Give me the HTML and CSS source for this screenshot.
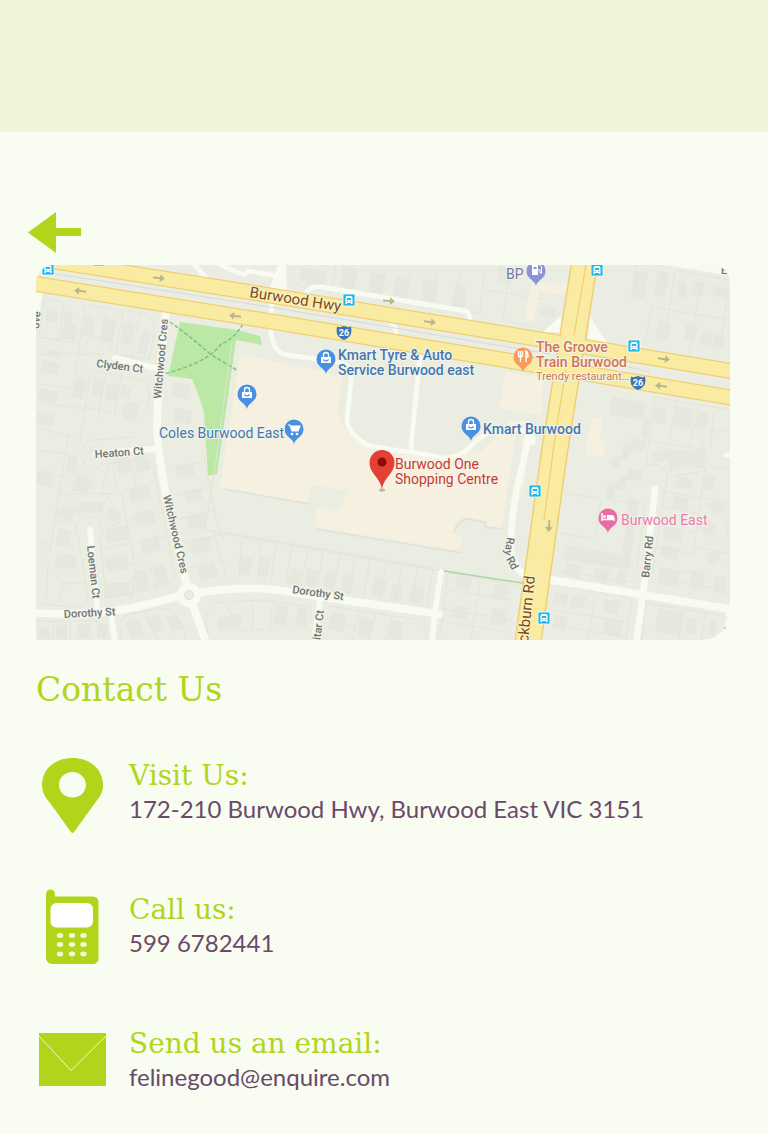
FILE: index.html
```html
<!DOCTYPE html>
<html lang="en">
<head>
<meta charset="utf-8">
<meta name="viewport" content="width=device-width, initial-scale=1">
<title>Contact Us</title>
<link rel="stylesheet" href="styles.css">
</head>
<body>
<header class="banner"></header>
<main class="page">
  <button class="back" type="button" aria-label="Back">
    <svg width="53" height="41" viewBox="0 0 53 41"><path d="M0 20.500 28 0v16h25v8H28v17z"/></svg>
  </button>

  <svg class="map" viewBox="36 265 694 375" role="img" aria-label="Map of Burwood One Shopping Centre">
    <defs>
      <path id="pin" d="M0 15C-1 9-9.500 8-9.500 0a9.500 9.500 0 0 1 19 0C9.500 8 1 9 0 15z"/>
      <g id="bag"><path d="M-5-1H5V5H-5z" fill="#fff"/><path d="M-2.500-1v-2a2.500 2.500 0 0 1 5 0v2" fill="none" stroke="#fff" stroke-width="1.300"/><path d="M-2.500 1.500q2.500 3 5 0" fill="none" stroke="#4a90e2" stroke-width="1.200"/></g>
      <g id="stop"><rect x="-6" y="-6" width="12" height="12" rx="1.500" fill="#1fb9f0" stroke="#f8fbf1" stroke-width=".8"/><path d="M-3.500 4V-2q0-2 2-2h3q2 0 2 2v6H2V3h-4v1z" fill="#fff"/><path d="M-2.200-2h4.400v2h-4.400zM-2.200 1h1v1h-1zM1.200 1h1v1h-1z" fill="#1fb9f0"/></g>
      <path id="arrow" d="M-6-1H1V-4L6 0 1 4V1H-6z" fill="#bab58a"/>
      <g id="shield"><path d="M-7-5.500 Q-4-4 0-6Q4-4 7-5.500 8-2 7 2 5 6 0 8-5 6-7 2-8-2-7-5.500z" fill="#3a76bd"/><text y="4" class="route">26</text></g>
    </defs>

    <rect x="36" y="265" width="694" height="375" fill="#ebede2"/>

    <g class="houses">
      <path d="M47 308l12 2-2 13-12-2zM64 312l9 2-1 9 6 3-1 3-13-3zM63 327l14 3-2 11-14-3zM86 315l9 4-2 18-12-3zM105 317l11 4-3 22-12-3zM124 321l11 3-3 22-12-3zM143 330l8 2-5 24-9-3zM48 349l13 3-1 6-14-3zM44 360l16 3-2 12-18-3zM40 388l18 4-3 12-17-4zM38 412l16 3-2 12-16-3zM76 377l11 3-4 20-12-3zM94 378l11 3-3 15-11-2zM108 382l12 3-4 17-12-3zM122 384l10 3-2 12-10-3zM124 402l15 1-2 18-15-2zM174 382l16 2-2 15-17-2zM174 408l18 2-1 14-18-2z"/>
      <path d="M68 455l9 1-1 17-10-2zM37 470l16 2-1 15-15-2zM78 474l16 6-7 14-17-4zM114 460l14-4 5 14-14 6zM134 457l13-3 4 15-14 4zM80 502l24 1-2 10-25-2zM110 507l12 6-7 10-11-7zM62 505l15 5-8 12-14-6zM60 527l12 4-3 16-15-2zM58 554l19 1-1 14-22-2zM129 490l19-4 2 12-20 4zM134 513l19-4 3 13-20 4zM106 529l21-4 2 14-22 4zM106 558l21-3 2 15-22 2zM106 584l24-2v14l-26 3zM140 541l18-6 3 14-19 6zM134 572l12-3 3 18-13 4zM153 568l11-4 6 18-13 5zM176 466l17-4 2 14-18 3zM184 491l17-3 2 12-17 3zM186 516l19-3 2 13-18 3zM190 540l20-4 2 14-20 4zM197 566l16-4 6 15-18 4z"/>
      <path d="M38 628h12v11H38zM56 625h11v14H56zM77 624h14v14H77zM97 624h11v14H97zM125 622l13-4 7 16-13 4zM145 619l12-5 8 14-11 7zM165 618l12-4 7 14-11 5zM218 619l22-6 2 12-24 6zM240 556l13 2-3 18-10-2zM262 556l9 2-4 19-10-2zM292 568l10 2-3 15-12-2zM307 568l12 3-4 17-11-3zM326 571l11 2-3 17-11-3zM344 574l10 3-3 17-11-3zM375 577l12 3-3 18-13-3zM393 584l10 2-3 15-11-2zM413 585l12 3-3 16-13-3zM275 604l13 2-2 20-13-2zM298 607l10 2-2 19-11-2zM331 612l15 2-2 18-16-2zM361 616l13 3-4 19-13-2zM392 620l12 3-4 17-12-2zM458 574l14 3-3 14-15-3zM496 583l14 3-4 14-14-3zM455 605l14 2-3 13-15-3zM493 608l15 2-3 16-15-2z"/>
      <path d="M300 267l27 4-3 15-24-4zM343 266l15 3-4 22-15-3zM371 272l15 3-4 22-15-3zM396 277l14 3-4 21-14-3zM424 279l15 3-3 21-16-3zM455 284l12 3-3 22-13-3zM499 266l14 1-2 17-14-2zM540 306l17 2-2 10-16-2zM635 270l13 3-4 26-12-3zM658 270l11 3-4 25-12-3zM675 281l10 1 3 18-9-2zM693 281l13 2-4 13-11-2zM714 286l13 2-2 10-13-2zM659 319l12 4-3 18-14-3zM686 323l12 4-3 14-11-3zM703 331l10 3-3 13-11-3zM715 333l11 3-3 14-11-3z"/>
      <path d="M611 396l35 7-3 17-34-5zM655 407l12 3-2 14-12-2zM676 405l18 4-3 20-17-4zM698 411l11 3-4 15-11-3zM644 417l6 1-3 20-5-1zM668 450l24 1 14-2-3 21-12-6-21 8zM651 453l17-6 4 12-18 4zM679 476l14 4-3 10-15-4zM706 473l10 2-2 16-12-3zM674 495l16 4-3 12-15-3zM706 505l12-6 8 9-9 9zM664 528l19 4-2 10-19-3zM697 526l12-7 8 9-11 9zM662 545l17 3-2 13-18-4zM706 555l12-5 4 10-12 6zM659 567l21 5-2 16-19-4zM692 570l13 4-3 16-13-3zM714 577l11-1v19l-12-3zM632 438l14 3-1 9-15 2-2 9-8-1-1 9-9-2 2-9 10-4 1-10 8 1zM630 468l12 3-2 10-12-1-4 9-9 1-2 9-8-2 2-12 12-3 2-8 7 1zM565 545l57 10 7-57 10 2-10 70-65-10zM567 562l13 3-2 13-14-3zM596 568l14 3-3 12-14-3zM620 570l7 3-3 12-9-2zM556 592l13 2-3 12-14-3zM574 594l13 2-4 13-14-3zM605 599l16 3-3 13-16-3zM556 615l12 2-3 13-13-2zM606 619l17 3-3 15-18-3zM658 608l25 4-3 24-25-4zM688 617l10 3-3 15-10-3zM710 620l8 2-4 15-6-3z"/>
    </g>
    <path class="lots" d="M45 299l19 3-5 38-20-3zM39 337l42 7M85 305l-10 70M85 305l56 8q12 2 14 13l-6 34M105 308l-4 38M123 312l-7 40M140 314l-8 42M36 354l68 0M82 356a15 15 0 0 1 30-6q4 6 12 5l26 5M36 384l56 6M36 402l54 8M84 365q4 8 14 7l30 5q20 2 22 12l-2 20M90 375l-10 67M106 372l-8 45M122 376l-8 40M72 405l38 7M36 428l36 8M68 436l-18 116M36 450l34 4M36 472l30 4M82 454a13 13 0 0 0 22 10l40-4q8 0 9 6M98 442l-38 52h52M82 450q2-10 14-10l40-3M110 462l-9 32h13M112 462l6 28M130 460l6 26M121 491l14 74M67 495l16 23M111 493l-14 22M54 520l24 6M36 540l16 6M76 533a13 13 0 1 1 25 0l26-16M101 549l30-6M103 567l33-3M78 534l9 60M36 604l44 3q8 0 8-12M100 536l6 62 60-12q10-4 8-16l-20-100M36 555l12 10-2 40M48 566l16 17-6 20M64 583h22M36 584l4 1M102 584h32l-3 15M150 566l6 26M121 491l34-8M129 520l37-8M134 544l37-8M136 567l-4 15M170 470l36-9M176 495l37-8M180 519l36-9M184 543l39-9M191 567l32-7M222 537l-6-20-14-70M214 533l13 45M242 538l-3 40M261 540l-3 38M276 544l-5 36M292 547l-6 37M308 550l-7 36M323 553l-6 36M340 556l-7 36M355 558l-7 36M370 561l-7 37M386 563l-7 37M402 566l-7 36M418 568l-7 36M222 532l211 36-6 36M36 621h60q8 2 8 19M53 621v19M70 621v19M86 621v19M121 640l-1-18q2-6 10-8l30-6q22 2 26 32M143 612l16 28M205 620q2-14 16-18l40-2 48 7q4 6 2 14M225 603l16 28 24-2M253 597v34M273 600l-3 30M205 620l4 20M328 606l92 14q8 4 5 20M360 610l-8 30M376 613l-8 27M392 616l-7 24M325 619l33 7M448 573l-8 62M480 580l-9 60M448 590l64 10M443 609l68 11M441 621l66 11M448 573l70 12"/>
    <path class="lots" d="M292 266q-8 12 10 20l180 28M312 266l-4 20M336 266l-6 26M357 270l-6 25M383 274l-6 25M410 274l-7 30M437 273l-7 35M460 273l-6 38M484 273l-4 40M484 290l60 9M508 280l-5 40 45 10M675 270l55 10M636 266l-4 32M675 272l-8 50M702 276l-14 80M652 307l78 13M652 307l-8 38M728 288l-8 62M653 397l77 13M655 398l-9 67M676 402l-7 42M697 405l-8 45M714 410l-4 40M649 441l58 9M646 465q22-2 21 16l-4 20M688 449l-28 22M666 477l40-6M661 491l70 12M730 430h-10a14 14 0 1 0 0 38h10M706 460l-13 95M663 501l-10 68q-2 8 12 10l65 12M662 507l35 6M660 526l36 6M656 548l40 6M652 567l44 6M693 546l37 8M693 514l30 30M730 538a20 20 0 0 1 0-24M563 493l82 12-8 63-79-12M601 499l-6 40-36-6M555 570l80 13M583 564l-7 24M607 568l-7 24M557 585l70 12q5 2 4 8l-5 35M595 594l-7 46M552 610l76 12M552 624l76 14M646 603l74 12M644 612l-3 28M646 603q-2 4-2 10M684 611l-5 29M706 614l-5 26"/>

    <path d="M180 322l58 8 22 6 2 9-26-5-19 134-9 2-4-63q-2-10-12-34l-14-2-10-1z" fill="#bbe8a4"/>
    <path class="trail" d="M170 322q20 14 40 32l30 18M243 324q-10 16-22 20-12 18-57 30"/>
    <path d="M232 342l-20 148-8 40 231 40" fill="none" stroke="#e0e4d9" stroke-width="1"/>
    <path d="M240 354l102 22-4 38q8 24 26 31l80 10 38-4 28-30h20l-6 70-19 37-20-3v-4l-19-4-10 4-3 12 9 4-3 14-144-24 2-20 22 3 9-19-37-6-3 18-88-15z" fill="#f5f0df"/>
    <path d="M516 432h8l-14 97-13-1z" fill="#ebede2"/>
    <path d="M516 432l-14 96-18-3z" fill="#f5f0df"/>
    <path d="M224 489l86 15M316 529l145 24M453 533q4-9 12-14l20 3v5l18 2" fill="none" stroke="#dfe2dc" stroke-width="1.500"/>
    <path d="M532 283h35v12l-28-4-5 31-10-1zM506 371l37 8-2 36-42-6zM592 417l10 2-2 22 5 1-2 16-18-3z" fill="#f5f0df"/>
    <path d="M438 570l97 15" fill="none" stroke="#aad5a5" stroke-width="1.500"/>

    <g class="road-edge"><use href="#streets"/></g>
    <g class="road"><g id="streets">
      <path d="M166 312Q158 380 157 430q2 30 10 70l22 95 18 50" stroke-width="8"/>
      <path d="M115 358l44 11M96 454q30-4 60-5M90 530l7 76M111 612l4 30" stroke-width="6"/>
      <path d="M36 613q60 3 100-6l53-13q60-10 100-2l150 22" stroke-width="8"/>
      <path d="M441 572l-6 40-3 30M320 600l-6 42" stroke-width="6"/>
      <path d="M529 432q-6 35-12 55-5 30-6 50-2 28 14 38" stroke-width="7"/>
      <path d="M540 578l190 31" stroke-width="8"/>
      <path d="M655 489l-10 90-9 65" stroke-width="7"/>
      <path d="M272 292l-1 33q-1 26 16 30l52 7q14 3 12 18l-4 40q1 14 20 25 30 6 45 7l32 6q16 0 27-12 18-18 32-17 32-1 30 14" stroke-width="5"/>
      <path d="M420 355l-9 92M307 292q4-8 20-4l139 23q5 2 3 10M385 320q12 2 11 18" stroke-width="5"/>
      <path d="M192 262l14 16M220 265l24 10 4-4 24 4" stroke-width="5"/>
      <path d="M726 455h6" stroke-width="5"/>
    </g></g>
    <path d="M543 332l18-16v16zM590 315q6 14 18 28l-20-2z" fill="#f8fbf1"/>
    <path d="M36 287v-22h8L36 278zM36 292l7 1-7 36z" fill="#f8fbf1"/>
    <path d="M665 265h65v10l-10-1zM722 607h8v33h-12q6-14 9-22z" fill="#f8fbf1"/>
    <path d="M278 265h8l1 28-18-3z" fill="#f8fbf1"/>
    <circle cx="189" cy="595" r="12" fill="#f8fbf1"/><circle cx="189" cy="595" r="4.500" fill="#ebede2" stroke="#dde1d6"/>

    <path d="M50 273l220 34 220 37 60 10M620 365l30 7" fill="none" stroke="#d7dad1" stroke-width="1"/>
    <g fill="none" stroke="#f0cf73" stroke-width="16">
      <path d="M46 260l184 29 250 40.500 260 43"/><path d="M36 284l220 35 224 37 260 43"/>
    </g>
    <path d="M572 260h26l-31 195-26 187h-26l26-187z" fill="#f9eca2" stroke="#f0cf73" stroke-width="1.500"/>
    <g fill="none" stroke="#f9eca2" stroke-width="13.500">
      <path d="M46 260l184 29 250 40.500 260 43"/><path d="M36 284l220 35 224 37 260 43"/>
    </g>
    <path d="M586 265l-12 70M566 370l-10 60-12 90" fill="none" stroke="#f0cf73" stroke-width="1.300"/>

    <use href="#arrow" transform="translate(159 278) rotate(8)"/>
    <use href="#arrow" transform="translate(80 291) rotate(188)"/>
    <use href="#arrow" transform="translate(235 316) rotate(188)"/>
    <use href="#arrow" transform="translate(389 301) rotate(5)"/>
    <use href="#arrow" transform="translate(430 322) rotate(8)"/>
    <use href="#arrow" transform="translate(664 359) rotate(8)"/>
    <use href="#arrow" transform="translate(661 386) rotate(188)"/>
    <use href="#arrow" transform="translate(549 526) rotate(95)"/>

    <use href="#stop" x="48" y="269"/><use href="#stop" x="99" y="260"/><use href="#stop" x="349" y="300"/><use href="#stop" x="597" y="270"/><use href="#stop" x="634" y="346"/><use href="#stop" x="535" y="491"/><use href="#stop" x="544" y="618"/>
    <use href="#shield" x="344" y="332"/><use href="#shield" x="638" y="382"/>

    <g class="street">
      <text transform="translate(96 367) rotate(7)">Clyden Ct</text>
      <text transform="translate(95 458) rotate(-4)">Heaton Ct</text>
      <text transform="translate(161 399) rotate(-85)">Witchwood Cres</text>
      <text transform="translate(163 496) rotate(77)">Witchwood Cres</text>
      <text transform="translate(87 546) rotate(84)">Loeman Ct</text>
      <text transform="translate(64 618) rotate(-3)">Dorothy St</text>
      <text transform="translate(292 593) rotate(8)">Dorothy St</text>
      <text transform="translate(320 643) rotate(-83)">iitar Ct</text>
      <text transform="translate(507 537) rotate(98)">Ray</text>
      <text transform="translate(506 559) rotate(62)">Rd</text>
      <text transform="translate(649 578) rotate(-84)">Barry Rd</text>
      <text transform="translate(39 329) rotate(-85)">ove</text>
      <text x="721" y="274">E</text>
      <text transform="translate(729 633) rotate(-75)">c</text>
    </g>
    <g class="highway">
      <text transform="translate(249 297) rotate(9)">Burwood Hwy</text>
      <text transform="translate(528 643) rotate(-84)">ckburn Rd</text>
    </g>

    <g fill="#4a90e2"><use href="#pin" x="326" y="359"/><use href="#pin" x="247" y="394"/><use href="#pin" x="294" y="429"/><use href="#pin" x="471" y="426"/></g>
    <use href="#bag" x="326" y="358"/><use href="#bag" x="247" y="393"/><use href="#bag" x="471" y="425"/>
    <path d="M288 425h2l2 6h6l2-5h-9" fill="#fff" stroke="#fff" stroke-width="1.200"/><circle cx="292" cy="434" r="1.300" fill="#fff"/><circle cx="297" cy="434" r="1.300" fill="#fff"/>
    <use href="#pin" x="523" y="357" fill="#f79a5e"/>
    <path d="M518.500 351v4q0 2 2 2t2-2v-4M520.500 351v11M526 362v-11q2 1 2 6h-2" fill="none" stroke="#fff" stroke-width="1.400"/>
    <use href="#pin" x="536" y="271" fill="#8c93d2"/>
    <path d="M532 265h6v10h-6z" fill="#fff"/><path d="M533.500 267h3v2h-3z" fill="#8c93d2"/><path d="M538 270h2v3h1.500v-6l-2-2" fill="none" stroke="#fff"/>
    <use href="#pin" x="608" y="518" fill="#e96ba8"/>
    <path d="M602 513v8M602 519.500h12v1.500M607 516h5q2 0 2 4" fill="none" stroke="#fff" stroke-width="1.500"/><path d="M607 515h5l2 4h-7z" fill="#fff"/><circle cx="604.500" cy="516.500" r="1.500" fill="#fff"/>
    <ellipse cx="382" cy="490" rx="3" ry="1.500" fill="#b9b8a8"/>
    <path d="M382 490C381 478 369.500 474 369.500 462.500a12.500 12.500 0 0 1 25 0C394.500 474 383 478 382 490z" fill="#e34133"/><circle cx="382" cy="462" r="4.500" fill="#8e0b0b"/>

    <g class="place">
      <g fill="#4377b3"><text x="338" y="360">Kmart Tyre &amp; Auto</text><text x="338" y="375">Service Burwood east</text><text x="159" y="438" class="regular">Coles Burwood East</text><text x="483" y="434">Kmart Burwood</text></g>
      <g fill="#c8392e" class="regular"><text x="395" y="469">Burwood One</text><text x="395" y="484">Shopping Centre</text></g>
      <g fill="#d0764f"><text x="536" y="352">The Groove</text><text x="536" y="367">Train Burwood</text><text x="536" y="380" class="note">Trendy restaurant…</text></g>
      <text x="506" y="279" class="regular" fill="#7178a8">BP</text>
      <text x="621" y="525" class="regular" fill="#eb78b0">Burwood East</text>
    </g>
  </svg>

  <h1 class="title">Contact Us</h1>

  <section class="contact">
    <svg class="icon" width="72" height="76" viewBox="0 0 72 76"><path fill-rule="evenodd" d="M36.500 0C55 0 67 12 67 27c0 8-4 13-8 18L38 74q-1.500 2-3 0L14 45C10 40 6 35 6 27 6 12 18 0 36.500 0zM36.500 14C29 14 23 19.500 23 27s6 12.500 13.500 12.500S50 34 50 27s-6-13-13.500-13z"/></svg>
    <div><h2 class="label">Visit Us:</h2><p class="detail">172-210 Burwood Hwy, Burwood East VIC 3151</p></div>
  </section>
  <section class="contact">
    <svg class="icon" width="72" height="76" viewBox="0 3 72 76"><path d="M10 5a4.500 4.500 0 0 1 9 0v2.500h38a5.500 5.500 0 0 1 5.500 5.500v56.500a5.500 5.500 0 0 1-5.500 5.500H16a6 6 0 0 1-6-6z"/><rect x="14.500" y="14" width="42.500" height="24.500" rx="6" fill="#fff"/><g fill="#f1f7db"><ellipse cx="24" cy="46.500" rx="3.200" ry="2.400"/><ellipse cx="36" cy="46.500" rx="3.200" ry="2.400"/><ellipse cx="47.500" cy="46.500" rx="3.200" ry="2.400"/><ellipse cx="24" cy="55.500" rx="3.200" ry="2.400"/><ellipse cx="36" cy="55.500" rx="3.200" ry="2.400"/><ellipse cx="47.500" cy="55.500" rx="3.200" ry="2.400"/><ellipse cx="24" cy="65" rx="3.200" ry="2.400"/><ellipse cx="36" cy="65" rx="3.200" ry="2.400"/><ellipse cx="47.500" cy="65" rx="3.200" ry="2.400"/></g></svg>
    <div><h2 class="label">Call us:</h2><p class="detail">599 6782441</p></div>
  </section>
  <section class="contact">
    <svg class="icon" width="72" height="76" viewBox="0 3 72 76"><path d="M3 10h67v53H3z"/><path d="M3 13l32 34.500L70 13" fill="none" stroke="#f1f7db"/></svg>
    <div><h2 class="label">Send us an email:</h2><p class="detail">felinegood@enquire.com</p></div>
  </section>
</main>
</body>
</html>
```
FILE: styles.css
```css
* { box-sizing: border-box; }
body { margin: 0; background: #f8fcf1; color: #6a4a6b; font-family: Lato, "Open Sans", sans-serif; }
.banner { height: 132px; background: #eff5da; }
.page { padding: 80px 38px 28px 36px; }
.back { display: block; margin: 0 0 12px -8px; padding: 0; border: 0; background: none; cursor: pointer; }
.back svg { display: block; fill: #b1d51b; }
.map { display: block; width: 100%; height: auto; border-radius: 18px 18px 28px 0; font-family: Roboto, sans-serif; }
.title, .label { margin: 0; color: #b1d51b; font-family: "DejaVu Serif", serif; font-weight: 400; }
.title { margin: 29px 0 47px; font-size: 33px; line-height: 42px; }
.contact { display: flex; gap: 21px; height: 76px; margin-bottom: 58px; }
.contact:last-child { margin-bottom: 0; }
.icon { flex: none; overflow: visible; fill: #b1d51b; }
.label { font-size: 28px; line-height: 36px; }
.detail { margin: 0; font-size: 24px; line-height: 30px; }

.houses { fill: #e6e8df; }
.lots { fill: none; stroke: #e2e5da; stroke-width: 1; }
.trail { fill: none; stroke: #7cc08c; stroke-width: 1.5; stroke-dasharray: 4 2; }
.road { fill: none; stroke: #f8fbf1; stroke-linecap: round; stroke-linejoin: round; }
.road-edge { fill: none; stroke: #dfe3d8; }
.street { fill: #6f7472; font-size: 11px; font-weight: 500; stroke: #f2f5eb; stroke-width: 2px; paint-order: stroke; }
.highway { fill: #7a4a1e; font-size: 15px; stroke: #fbf3c4; stroke-width: 2px; paint-order: stroke; }
.place { font-size: 14px; font-weight: 500; stroke: #f3f4ea; stroke-width: 2px; paint-order: stroke; }
.regular { font-weight: 400; }
.place .note { font-size: 11px; font-weight: 400; }
.route { fill: #fff; font-size: 9px; font-weight: 700; text-anchor: middle; stroke: none; }
```
